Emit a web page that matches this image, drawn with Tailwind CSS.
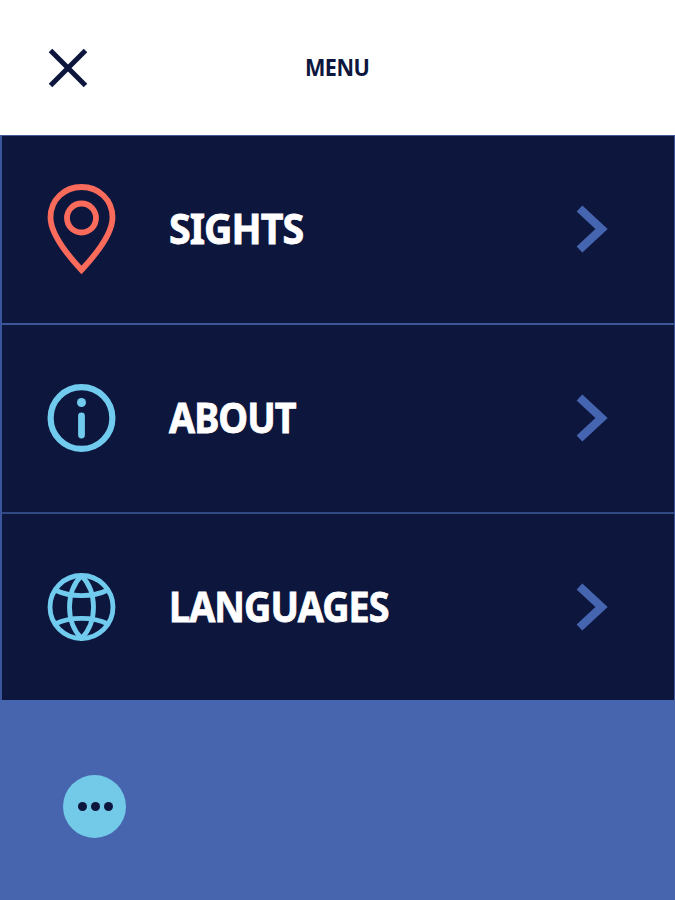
<!DOCTYPE html>
<html lang="en">
<head>
    <meta charset="UTF-8">
    <title>Menu</title>
    <script src="https://cdn.jsdelivr.net/npm/@tailwindcss/browser@4"></script>
</head>
<body class="h-screen overflow-hidden flex flex-col bg-[#4665ae] font-['Noto_Sans',sans-serif] font-bold">
<!-- Top bar with close button -->
<header class="h-[135px] shrink-0 grid grid-cols-3 items-center bg-white text-[#0d163c]">
    <button class="ml-12 w-10 h-10" aria-label="Close">
        <svg class="w-10 h-10" viewBox="0 0 40 40" fill="none" stroke="currentColor" stroke-width="5">
            <path d="M2.500 2.500 37.500 37.500M37.500 2.500 2.500 37.500"/>
        </svg>
    </button>
    <h1 class="text-center pt-0.5"><span class="inline-block text-[23px] leading-none tracking-[-0.6px] scale-x-94">MENU</span></h1>
</header>
<!-- Menu entries -->
<nav class="h-[565px] shrink-0 flex flex-col border-t border-x border-t-[#4a5a98] border-l-2 border-x-[#3a559c] bg-[#0d173d] text-white text-[41px] leading-none">
    <a class="h-[189px] flex items-center pl-[45px] pr-[66px] pb-px border-b-2 border-[#3c5596]">
        <svg class="w-[69px] h-[92px]" viewBox="-0.5 0 69 92" fill="none" stroke="#fb6b5b" stroke-width="5.800">
            <path d="M34 87C14 65.500 3 47 3 34.500C3 16.500 17 4 34 4S65 16.500 65 34.500C65 47 54 65.500 34 87Z" stroke-linejoin="miter"/>
            <circle cx="34" cy="35" r="14.500"/>
        </svg>
        <span class="ml-[53px] pb-0.5 origin-left scale-x-96 tracking-[-1px] [-webkit-text-stroke:0.8px_white]">SIGHTS</span>
        <svg class="ml-auto w-8 h-12" viewBox="-0.5 0 32 48" fill="none" stroke="#4665b0" stroke-width="8.400">
            <path d="M3 3.500 25 24 3 44.500"/>
        </svg>
    </a>
    <a class="h-[189px] flex items-center pl-[45px] pr-[66px] pb-0.5 border-b-2 border-[#304984]">
        <svg class="w-[69px] h-[68px]" viewBox="-0.5 0 69 68" fill="none" stroke="#71cbee">
            <circle cx="34" cy="34" r="30.900" stroke-width="6.200"/>
            <circle cx="34" cy="18.500" r="4.500" fill="#71cbee" stroke="none"/>
            <path d="M34 32V51" stroke-width="6.800" stroke-linecap="round"/>
        </svg>
        <span class="ml-[53px] origin-left scale-x-92 tracking-[-1px] [-webkit-text-stroke:0.8px_white]">ABOUT</span>
        <svg class="ml-auto w-8 h-12" viewBox="-0.5 0 32 48" fill="none" stroke="#4665b0" stroke-width="8.400">
            <path d="M3 3.500 25 24 3 44.500"/>
        </svg>
    </a>
    <a class="h-[186px] flex items-center pl-[45px] pr-[66px]">
        <svg class="w-[69px] h-[68px]" viewBox="-0.5 0 69 68" fill="none" stroke="#71cbee" stroke-width="4.800">
            <circle cx="34" cy="34" r="31.500"/>
            <path d="M34 2.500C18 19 18 49 34 65.500C50 49 50 19 34 2.500Z"/>
            <path d="M7.500 17C23 24.500 45 24.500 60.500 17M7.500 51C23 43.500 45 43.500 60.500 51"/>
        </svg>
        <span class="ml-[53px] pb-0.5 origin-left scale-x-92 tracking-[-1px] [-webkit-text-stroke:0.8px_white]">LANGUAGES</span>
        <svg class="ml-auto w-8 h-12" viewBox="-0.5 0 32 48" fill="none" stroke="#4665b0" stroke-width="8.400">
            <path d="M3 3.500 25 24 3 44.500"/>
        </svg>
    </a>
</nav>
<!-- More button -->
<footer class="pt-[75px] pl-[63px]">
    <button class="w-[63px] h-[63px] rounded-full bg-[#73c9e8] flex items-center justify-center gap-1 pl-px" aria-label="More">
        <span class="size-[9px] rounded-full bg-[#0d163c]"></span>
        <span class="size-[9px] rounded-full bg-[#0d163c]"></span>
        <span class="size-[9px] rounded-full bg-[#0d163c]"></span>
    </button>
</footer>
</body>
</html>
